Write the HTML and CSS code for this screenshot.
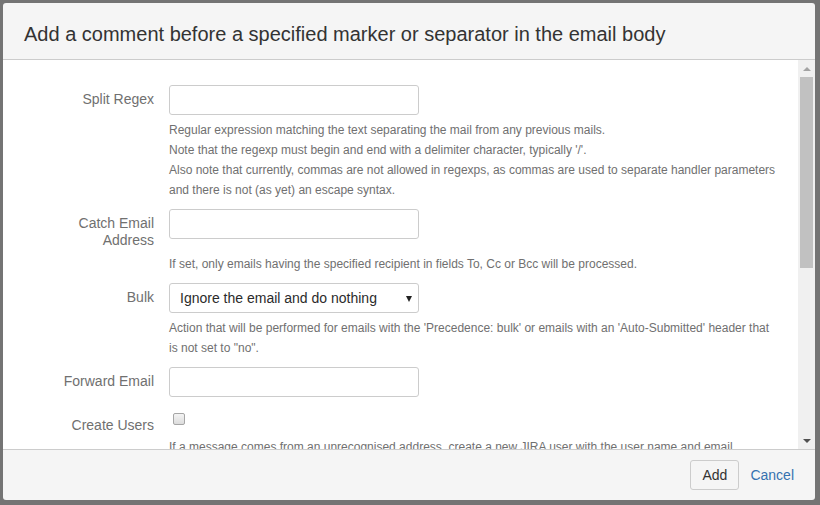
FILE: index.html
```html
<!DOCTYPE html>
<html>
<head>
    <title>Add a comment before a specified marker or separator</title>
    <link rel="stylesheet" href="styles.css">
</head>
<body>
    <div class="dialog">
        <div class="dialog-header">
            <h2>Add a comment before a specified marker or separator in the email body</h2>
        </div>

        <div class="dialog-body">
            <form class="dialog-content">
                <div class="field-group">
                    <label for="splitRegex">Split Regex</label>
                    <input type="text" id="splitRegex" class="text">
                    <div class="description">
                        Regular expression matching the text separating the mail from any previous mails.<br>
                        Note that the regexp must begin and end with a delimiter character, typically '/'.<br>
                        Also note that currently, commas are not allowed in regexps, as commas are used to separate handler parameters and there is not (as yet) an escape syntax.
                    </div>
                </div>

                <div class="field-group">
                    <label for="catchEmail">Catch Email Address</label>
                    <input type="text" id="catchEmail" class="text">
                    <div class="description">If set, only emails having the specified recipient in fields To, Cc or Bcc will be processed.</div>
                </div>

                <div class="field-group">
                    <label for="bulk">Bulk</label>
                    <div class="select">
                        <span>Ignore the email and do nothing</span>
                        <span class="select-arrow"></span>
                    </div>
                    <div class="description">Action that will be performed for emails with the 'Precedence: bulk' or emails with an 'Auto-Submitted' header that is not set to "no".</div>
                </div>

                <div class="field-group">
                    <label for="forwardEmail">Forward Email</label>
                    <input type="text" id="forwardEmail" class="text">
                </div>

                <div class="field-group checkbox-group">
                    <label for="createUsers">Create Users</label>
                    <div class="checkbox-cell">
                        <input type="checkbox" id="createUsers" class="checkbox">
                    </div>
                    <div class="description">If a message comes from an unrecognised address, create a new JIRA user with the user name and email address set to the sender's address.</div>
                </div>
            </form>

            <div class="scrollbar">
                <div class="scroll-btn"><span class="arrow-up"></span></div>
                <div class="scroll-thumb"></div>
                <div class="scroll-track"></div>
                <div class="scroll-btn"><span class="arrow-down"></span></div>
            </div>
        </div>

        <div class="dialog-footer">
            <button type="button" class="button">Add</button>
            <a href="#" class="cancel">Cancel</a>
        </div>
    </div>
</body>
</html>
```

FILE: styles.css
```css
html, body {
    margin: 0;
    height: 100%;
}
body {
    font-family: "Liberation Sans", Arial, sans-serif;
    font-size: 14px;
    background: #747474;
    padding: 3px 0 0 3px;
    box-sizing: border-box;
}
.dialog {
    width: 812px;
    height: 497px;
    background: #f5f5f5;
    border-radius: 3px;
    display: flex;
    flex-direction: column;
    overflow: hidden;
}
.dialog-header {
    height: 57px;
    box-sizing: border-box;
    padding: 19px 20px 0 21px;
    border-bottom: 1px solid #cccccc;
}
.dialog-header h2 {
    margin: 0;
    font-size: 20px;
    font-weight: normal;
    line-height: 24px;
    color: #333333;
}
.dialog-body {
    height: 389px;
    display: flex;
    background: white;
}
.dialog-content {
    flex: 1;
    overflow: hidden;
    padding: 25px 21px 0 30px;
    margin: 0;
}
.field-group {
    display: grid;
    grid-template-columns: 121px 608px;
    column-gap: 15px;
    margin-bottom: 9px;
}
.field-group label {
    color: #707070;
    text-align: right;
    line-height: 17px;
    padding-top: 6px;
}
.text, .select {
    width: 250px;
    height: 30px;
    box-sizing: border-box;
    border: 1px solid #cccccc;
    border-radius: 3px;
    background: white;
    margin: 0;
    font: inherit;
}
.select {
    position: relative;
    padding: 0 0 0 10px;
    line-height: 28px;
    color: #2b2b2b;
}
.select-arrow {
    position: absolute;
    right: 6px;
    top: 12px;
    border-left: 3.5px solid transparent;
    border-right: 3.5px solid transparent;
    border-top: 6px solid #222222;
}
.description {
    grid-column: 2;
    margin-top: 5px;
    font-size: 12px;
    line-height: 20px;
    color: #707070;
}
.checkbox-group label {
    padding-top: 11px;
}
.checkbox-group .description {
    margin-top: 3px;
}
.checkbox-cell {
    padding: 7px 0 0 4px;
}
.checkbox {
    appearance: none;
    -webkit-appearance: none;
    display: block;
    width: 12px;
    height: 12px;
    margin: 0;
    border: 1px solid #a6a6a6;
    border-radius: 2px;
    background: linear-gradient(#f4f4f4, #dcdcdc);
}
.scrollbar {
    width: 17px;
    background: #f0f0f0;
    display: flex;
    flex-direction: column;
}
.scroll-btn {
    height: 17px;
    display: flex;
    align-items: center;
    justify-content: center;
}
.arrow-up {
    border-left: 4px solid transparent;
    border-right: 4px solid transparent;
    border-bottom: 4px solid #a3a3a3;
}
.arrow-down {
    border-left: 4px solid transparent;
    border-right: 4px solid transparent;
    border-top: 4px solid #505050;
}
.scroll-thumb {
    height: 191px;
    margin: 0 2px;
    background: #c1c1c1;
}
.scroll-track {
    flex: 1;
}
.dialog-footer {
    flex: 1;
    border-top: 1px solid #cccccc;
    display: flex;
    justify-content: flex-end;
    align-items: flex-start;
    gap: 11px;
    padding: 10px 21px 0 0;
}
.button {
    height: 30px;
    padding: 0 11px;
    font: inherit;
    color: #333333;
    background: #f5f5f5;
    border: 1px solid #cccccc;
    border-radius: 3px;
}
.cancel {
    color: #3572b0;
    text-decoration: none;
    line-height: 30px;
}
```
